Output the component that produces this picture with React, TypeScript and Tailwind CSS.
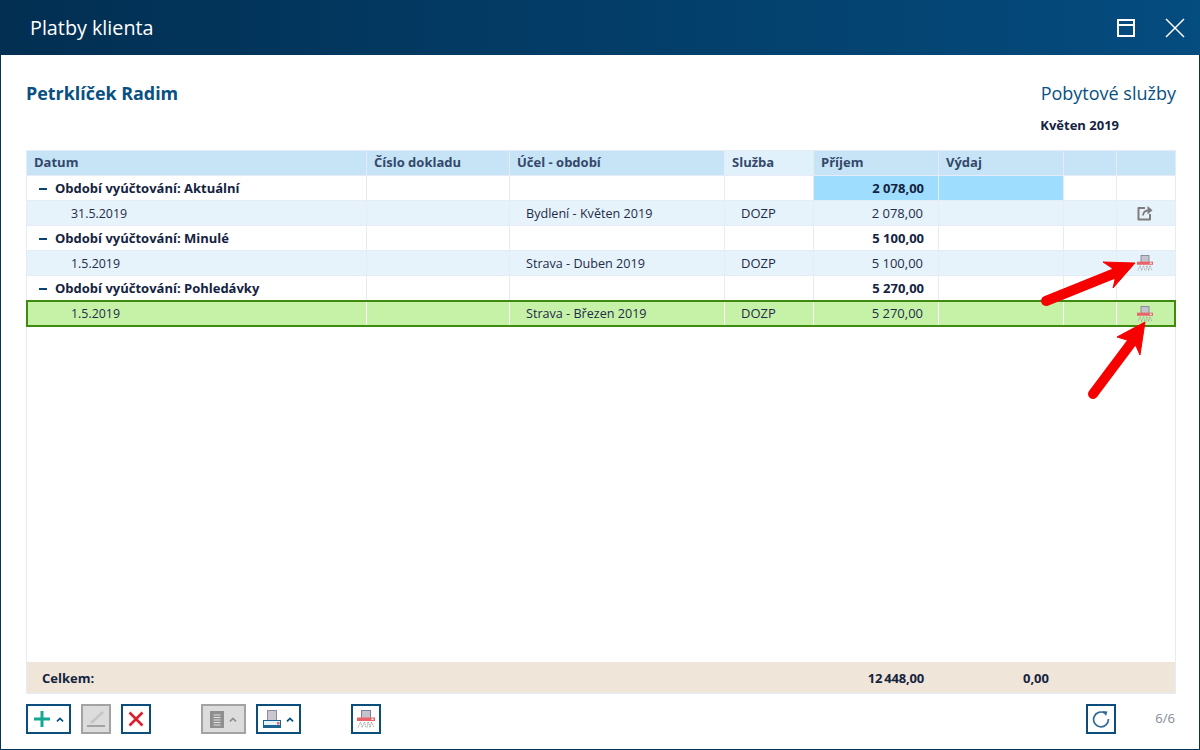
const font = { fontFamily: '"Open Sans", "Noto Sans", sans-serif' };

const colWidths = [
  "w-[340px]",
  "w-[143px]",
  "w-[215px]",
  "w-[89px]",
  "w-[125px]",
  "w-[125px]",
  "w-[53px]",
  "w-[58px]",
];

function ShredderIcon({ className = "" }: { className?: string }) {
  return (
    <svg viewBox="0 0 18 18" className={className}>
      <rect x="4.5" y="0.5" width="9" height="8" fill="#c4c2ca" stroke="#85809a" />
      <rect x="0" y="7.500" width="18" height="3.500" fill="#e8646a" />
      <rect x="14.500" y="8.500" width="2" height="1.500" fill="#fff" />
      <path
        d="M1 17.500l2.500-5.500M3.500 12l2 5.500M5 17.500l2.500-5.500M7.500 12l1.500 5.500M10 17.500l1-5.500M11 12l2.500 5.500M13 17.500l1.500-5.500M14.500 12l2.500 5.500"
        stroke="#999999"
        strokeWidth="0.9"
        strokeDasharray="1.300 0.700"
        fill="none"
      />
    </svg>
  );
}

function ShareIcon() {
  return (
    <svg viewBox="0 0 16 16" className="h-4 w-4" fill="none" stroke="#7c7c7c" strokeWidth="2">
      <path d="M8 3H1.500v11.500H13V9" strokeLinejoin="round" />
      <path d="M6 10.500c.3-3 2.400-5 5.500-5" strokeWidth="1.800" />
      <path d="M10.500 1l5 4.300-5 4.200z" fill="#7c7c7c" stroke="none" />
    </svg>
  );
}

function Caret({ color = "#075082" }: { color?: string }) {
  return (
    <svg viewBox="0 0 8 5" className="h-[5px] w-2" fill="none" stroke={color} strokeWidth="1.7">
      <path d="M1 4.4L4 1.4l3 3" />
    </svg>
  );
}

function Cell({ width, className = "", children }: { width: string; className?: string; children?: React.ReactNode }) {
  return (
    <div className={`${width} shrink-0 h-full flex items-center border-r border-[#e6ebf8] last:border-r-0 ${className}`}>
      {children}
    </div>
  );
}

function HeaderRow() {
  const labels = ["Datum", "Číslo dokladu", "Účel - období", "Služba", "Příjem", "Výdaj", "", ""];
  return (
    <div className="flex h-[25px] border-b border-[#e6ebf8] text-[13px] font-bold text-[#34486b]">
      {labels.map((label, i) => (
        <Cell key={i} width={colWidths[i]} className={`px-[7px] ${i === 3 ? "bg-[#e1f1fb]" : "bg-[#c6e4f6]"}`}>
          {label}
        </Cell>
      ))}
    </div>
  );
}

function GroupRow({ label, amount, highlight }: { label: string; amount: string; highlight?: boolean }) {
  return (
    <div className="flex h-[25px] border-b border-[#e6ebf8] bg-white text-[13px] font-bold text-[#14233f]">
      <Cell width={colWidths[0]} className="pl-3 pt-[2px]">
        <span className="mr-2 h-[2px] w-2 bg-[#0b4372]" />
        {label}
      </Cell>
      <Cell width={colWidths[1]} />
      <Cell width={colWidths[2]} />
      <Cell width={colWidths[3]} />
      <Cell width={colWidths[4]} className={`justify-end pr-[14px] pt-[2px] ${highlight ? "bg-[#9eddfd]" : ""}`}>
        {amount}
      </Cell>
      <Cell width={colWidths[5]} className={highlight ? "bg-[#9eddfd]" : ""} />
      <Cell width={colWidths[6]} />
      <Cell width={colWidths[7]} />
    </div>
  );
}

function DetailRow({
  date,
  purpose,
  amount,
  icon,
  selected,
}: {
  date: string;
  purpose: string;
  amount: string;
  icon: React.ReactNode;
  selected?: boolean;
}) {
  const divider = selected ? "border-r-white pt-px" : "pt-[2px]";
  return (
    <div
      className={`flex text-[13px] text-[#1f2b4a] ${
        selected
          ? "relative z-10 -mx-px -mt-px h-[27px] items-stretch border-2 border-[#3f8a0f] bg-[#c6f2a8]"
          : "h-[25px] border-b border-[#e6ebf8] bg-[#e6f3fb]"
      }`}
    >
      <Cell
        width={selected ? "w-[339px]" : colWidths[0]}
        className={`${selected ? "pl-[43px]" : "pl-11"} text-[12.4px] ${divider}`}
      >
        {date}
      </Cell>
      <Cell width={colWidths[1]} className={divider} />
      <Cell width={colWidths[2]} className={`pl-4 text-[12.6px] ${divider}`}>
        {purpose}
      </Cell>
      <Cell width={colWidths[3]} className={`pl-4 ${divider}`}>
        DOZP
      </Cell>
      <Cell width={colWidths[4]} className={`justify-end pr-[15px] ${divider}`}>
        {amount}
      </Cell>
      <Cell width={colWidths[5]} className={divider} />
      <Cell width={colWidths[6]} className={divider} />
      <Cell width={colWidths[7]} className="justify-center pr-[2px]">
        {icon}
      </Cell>
    </div>
  );
}

function ToolButton({
  disabled,
  className = "",
  children,
}: {
  disabled?: boolean;
  className?: string;
  children: React.ReactNode;
}) {
  return (
    <button
      className={`flex h-[30px] items-center justify-center border-2 ${
        disabled ? "border-[#a3a3a3] bg-[#dcdcdc]" : "border-[#0b4d7c] bg-white"
      } ${className}`}
    >
      {children}
    </button>
  );
}

function Arrows() {
  return (
    <svg className="pointer-events-none absolute left-0 top-0 z-20" width="1200" height="750">
      <defs>
        <filter id="soft" x="-20%" y="-20%" width="140%" height="140%">
          <feGaussianBlur stdDeviation="0.6" />
        </filter>
      </defs>
      <g fill="#f70000" stroke="#f70000" filter="url(#soft)">
        <path d="M1046 301L1113 274" strokeWidth="10" strokeLinecap="round" />
        <path d="M1135 263L1103 262L1112 268L1115 280L1113 288Z" strokeWidth="1" />
        <path d="M1093 394L1132 342" strokeWidth="10" strokeLinecap="round" />
        <path d="M1145 322L1117 337L1127 340L1136 346L1140 355Z" strokeWidth="1" />
      </g>
    </svg>
  );
}

export default function App() {
  return (
    <div style={font} className="relative flex h-[750px] w-[1200px] flex-col overflow-hidden bg-white">
      <header className="flex h-[55px] shrink-0 items-center justify-between bg-gradient-to-r from-[#022f52] to-[#054c7f] pl-[30px] pr-[15px]">
        <h1 className="text-[19.75px] text-white">Platby klienta</h1>
        <div className="flex items-center gap-[30px]">
          <div className="h-[18px] w-[18px] border-2 border-white pt-[3px]">
            <div className="h-[2px] bg-white" />
          </div>
          <svg viewBox="0 0 20 20" className="h-5 w-5" stroke="white" strokeWidth="1.5">
            <path d="M1 1l18 18M19 1L1 19" />
          </svg>
        </div>
      </header>

      <main className="flex min-h-0 flex-1 flex-col border-x border-b border-[#02345a] pl-[25px] pr-[23px]">
        <div className="flex h-[95px] shrink-0 justify-between">
          <div className="pt-[24px] text-[17.9px] font-bold leading-[28px] text-[#075082]">Petrklíček Radim</div>
          <div className="flex flex-col items-end pt-[24px]">
            <div className="text-[18px] leading-[28px] text-[#075082]">Pobytové služby</div>
            <div className="mr-[57px] mt-[9px] text-[13px] font-bold leading-[18px] text-[#14233f]">Květen 2019</div>
          </div>
        </div>

        <section className="flex h-[544px] w-[1150px] shrink-0 flex-col border border-[#e6ebf8]">
          <HeaderRow />
          <GroupRow label="Období vyúčtování: Aktuální" amount="2 078,00" highlight />
          <DetailRow date="31.5.2019" purpose="Bydlení - Květen 2019" amount="2 078,00" icon={<ShareIcon />} />
          <GroupRow label="Období vyúčtování: Minulé" amount="5 100,00" />
          <DetailRow
            date="1.5.2019"
            purpose="Strava - Duben 2019"
            amount="5 100,00"
            icon={<ShredderIcon className="h-4 w-4" />}
          />
          <GroupRow label="Období vyúčtování: Pohledávky" amount="5 270,00" />
          <DetailRow
            date="1.5.2019"
            purpose="Strava - Březen 2019"
            amount="5 270,00"
            icon={<ShredderIcon className="h-4 w-4" />}
            selected
          />
          <div className="flex-1" />
          <div className="flex h-[31px] shrink-0 items-center bg-[#efe5d8] pt-[2px] text-[13px] font-bold text-[#14233f]">
            <div className="w-[787px] pl-[15px]">Celkem:</div>
            <div className="w-[110px] text-right tracking-[-0.2px] [word-spacing:-1px]">12 448,00</div>
            <div className="w-[125px] text-right">0,00</div>
          </div>
        </section>

        <footer className="flex flex-1 items-start pt-[10px]">
          <ToolButton className="w-[45px] gap-[5px]">
            <svg viewBox="0 0 18 18" className="h-[18px] w-[18px]" stroke="#12a892" strokeWidth="3">
              <path d="M9 1v16M1 9h16" />
            </svg>
            <Caret />
          </ToolButton>
          <ToolButton disabled className="ml-[10px] w-[30px]">
            <svg viewBox="0 0 20 20" className="h-5 w-5" fill="none">
              <path d="M5 14L17 3" stroke="#c4c4c4" strokeWidth="2.4" />
              <path d="M1 17h18" stroke="#a3a3a3" strokeWidth="2" />
            </svg>
          </ToolButton>
          <ToolButton className="ml-[10px] w-[30px]">
            <svg viewBox="0 0 16 16" className="h-4 w-4" stroke="#d8202f" strokeWidth="2.6">
              <path d="M1.5 1.5l13 13M14.5 1.5l-13 13" />
            </svg>
          </ToolButton>
          <ToolButton disabled className="ml-[50px] w-[45px] gap-[5px]">
            <svg viewBox="0 0 14 17" className="h-[17px] w-[14px]">
              <rect width="14" height="17" fill="#8f8f8f" />
              <path d="M3.500 4h7M3.500 6.500h7M3.500 9h7M3.500 11.500h7M3.500 14h7" stroke="#e2e2e2" />
            </svg>
            <Caret color="#8f8f8f" />
          </ToolButton>
          <ToolButton className="ml-[10px] w-[45px] gap-[5px]">
            <svg viewBox="0 0 18 18" className="h-[18px] w-[18px]">
              <rect x="4.500" y="0.500" width="9" height="11" fill="#c9c6cf" stroke="#8f8a9c" />
              <rect x="0.500" y="10.500" width="17" height="7" fill="#e6f3fb" stroke="#1c6390" />
              <rect x="0" y="15" width="18" height="3" fill="#1c6390" />
              <rect x="14" y="12" width="2.500" height="2.500" fill="#e8646a" />
            </svg>
            <Caret />
          </ToolButton>
          <ToolButton className="ml-[50px] w-[30px]">
            <ShredderIcon className="h-[18px] w-[18px]" />
          </ToolButton>
          <ToolButton className="ml-auto w-[30px]">
            <svg viewBox="0 0 18 18" className="h-[18px] w-[18px]" fill="none" stroke="#2f6b96" strokeWidth="1.700">
              <path d="M13 3.200A7.400 7.400 0 1 0 16.400 9" />
              <path d="M10.500 1l5 0.500-1.500 4.500z" fill="#2f6b96" stroke="none" />
            </svg>
          </ToolButton>
          <div className="ml-[39px] mr-[1px] mt-[5px] text-[13px] text-[#7f8a99]">6/6</div>
        </footer>
      </main>

      <Arrows />
    </div>
  );
}
